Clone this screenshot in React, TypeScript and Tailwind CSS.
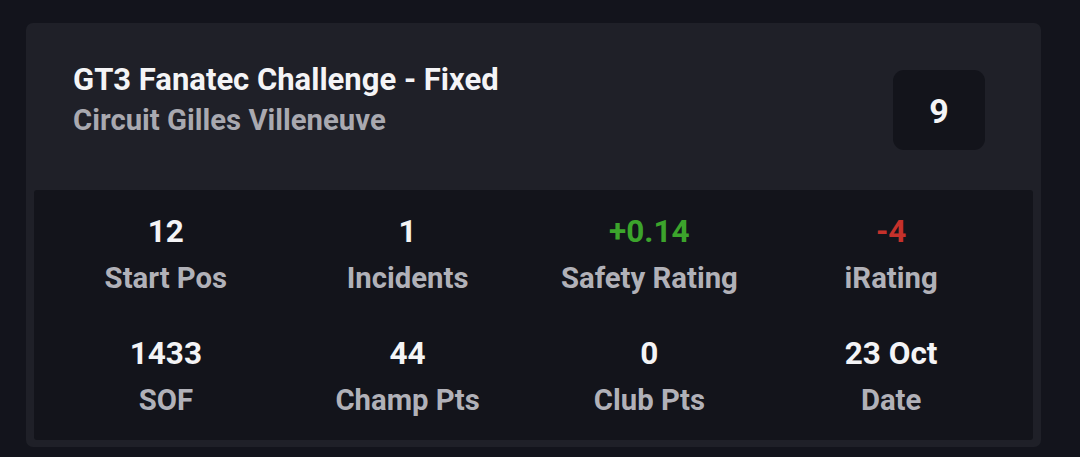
import React from "react";

const stats = [
  { v: "12", l: "Start Pos", c: "text-[#f4f4f6]" },
  { v: "1", l: "Incidents", c: "text-[#f4f4f6]" },
  { v: "+0.14", l: "Safety Rating", c: "text-[#3ca42c]" },
  { v: "-4", l: "iRating", c: "text-[#c5312b]" },
  { v: "1433", l: "SOF", c: "text-[#f4f4f6]" },
  { v: "44", l: "Champ Pts", c: "text-[#f4f4f6]" },
  { v: "0", l: "Club Pts", c: "text-[#f4f4f6]" },
  { v: "23 Oct", l: "Date", c: "text-[#f4f4f6]" },
];

export default function App() {
  return (
    <div
      className="w-[1080px] h-[457px] bg-[#13141c] pt-[23px] pl-[26px] overflow-hidden"
      style={{ fontFamily: "Roboto, 'Liberation Sans', sans-serif" }}
    >
      <div className="w-[1015px] h-[424px] bg-[#1f2028] rounded-[7px] pt-[47px] px-2 pb-[7px] flex flex-col">
        <div className="flex justify-between items-start pl-[39px] pr-[48px] h-[120px] shrink-0">
          <div className="flex flex-col -mt-[11px]">
            <div className="text-[31px] leading-[41px] font-bold text-[#f4f4f6]">
              GT3 Fanatec Challenge - Fixed
            </div>
            <div className="text-[29.3px] leading-[41px] font-bold text-[#a9a9b0]">
              Circuit Gilles Villeneuve
            </div>
          </div>
          <div className="w-[92px] h-[80px] rounded-[11px] bg-[#13141b] flex items-center justify-center text-[34px] font-bold text-[#f4f4f6] pt-[3px]">
            9
          </div>
        </div>
        <div className="h-[250px] bg-[#13141b] rounded-[3px] pl-[11px] pr-[21px] pt-[19px] pb-[17px] grid grid-cols-4 gap-y-[30px]">
          {stats.map((s) => (
            <div key={s.l} className="flex flex-col items-center">
              <div className={`text-[31.5px] leading-[45px] font-bold ${s.c}`}>{s.v}</div>
              <div className="mt-[2px] text-[29.3px] leading-[45px] font-bold text-[#b1b1b8]">{s.l}</div>
            </div>
          ))}
        </div>
      </div>
    </div>
  );
}
